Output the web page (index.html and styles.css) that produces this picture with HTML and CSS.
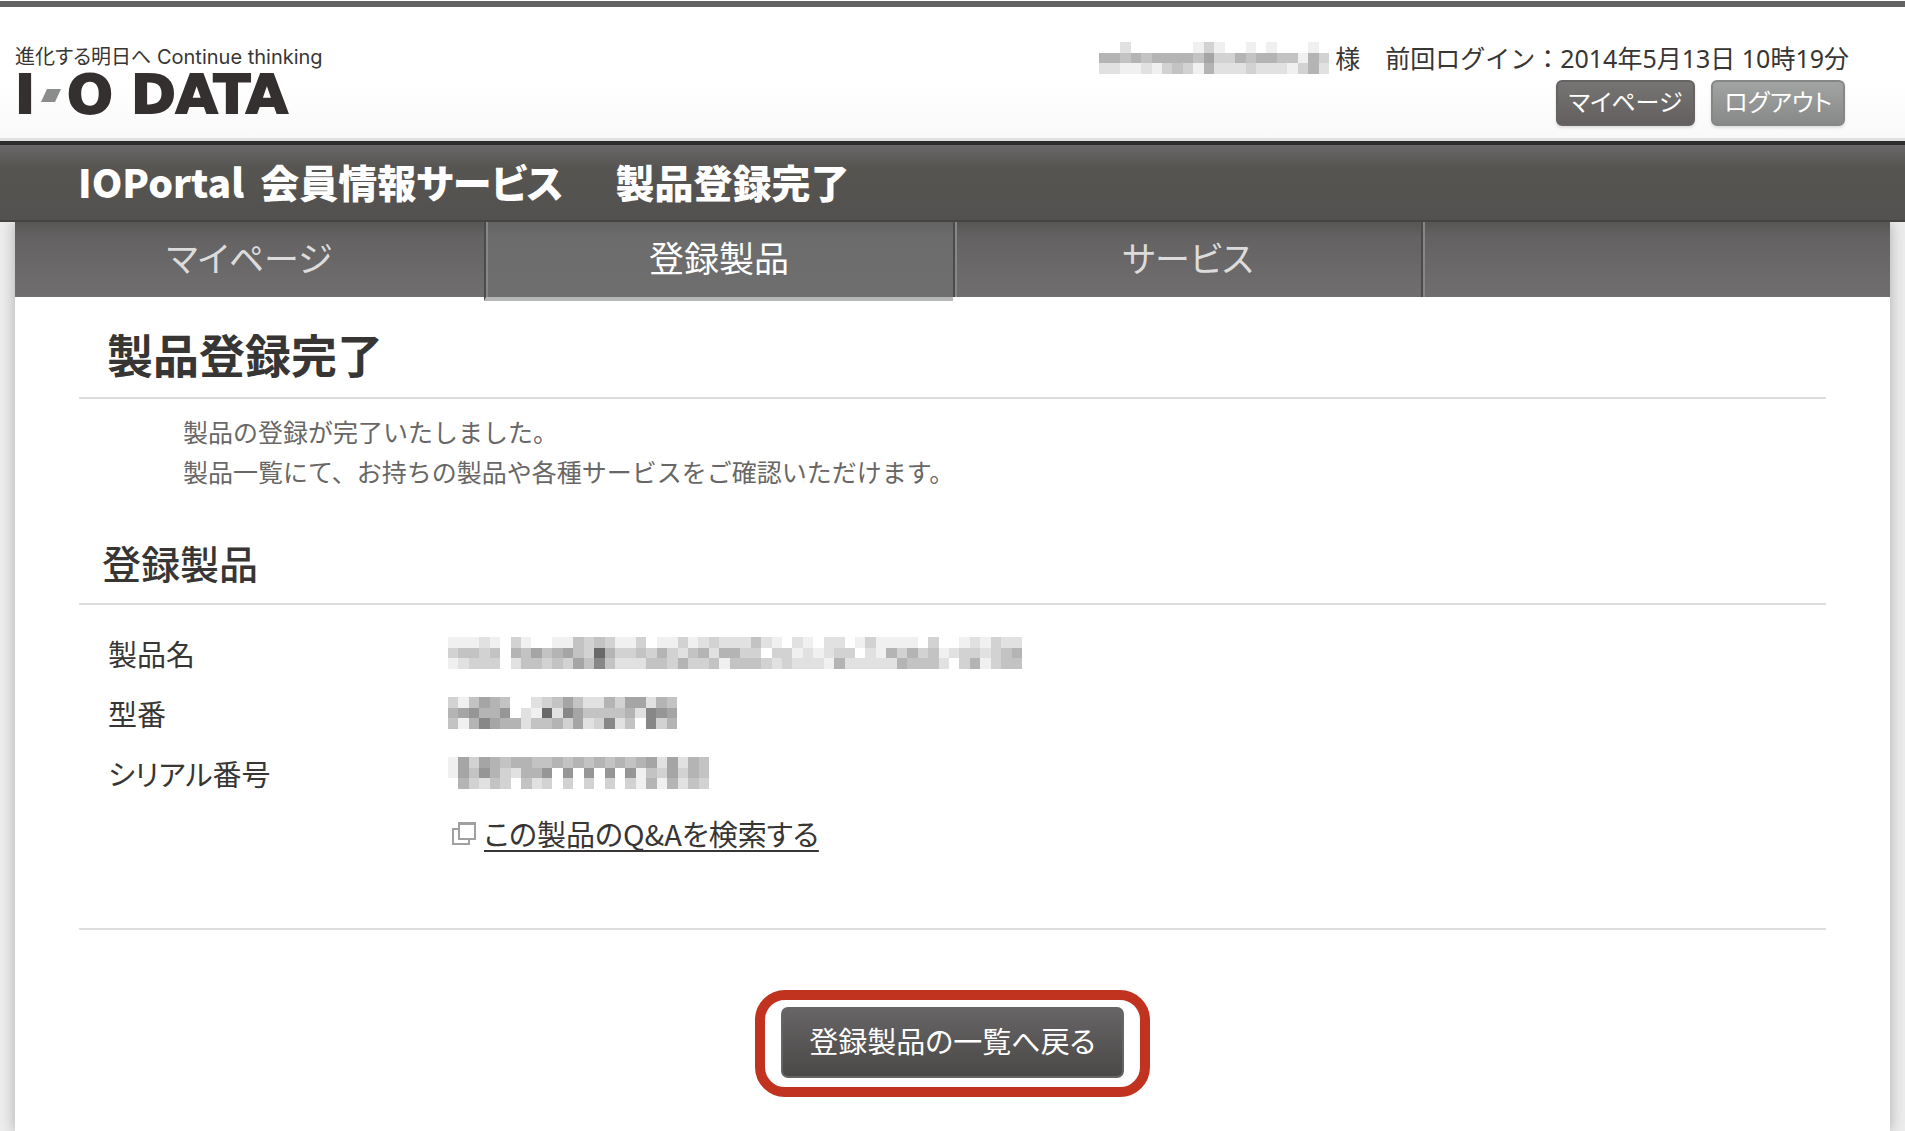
FILE: index.html
```
<!DOCTYPE html>
<html lang="ja">
<head>
    <meta charset="UTF-8">
    <meta name="viewport" content="width=device-width, initial-scale=1.0">
    <title>製品登録完了 | IOPortal 会員情報サービス</title>
    <link rel="stylesheet" href="styles.css">
</head>
<body>
    <header class="header">
        <div class="brand">
            <p class="tagline">進化する明日へ Continue thinking</p>
            <div class="logo">
                <span>I</span>
                <svg class="logo-dash" viewBox="0 0 20 13" aria-hidden="true"><path d="M6 0H20L14 13H0Z" fill="#8b8c8c"/></svg>
                <span>O</span>
                <span class="logo-data">DATA</span>
            </div>
        </div>
        <div class="user">
            <p class="login">
                <svg class="mosaic" data-rows="00020000001310010100010,05545455554633545544153,02211213431522232221352"></svg>
                <span>様　前回ログイン：2014年5月13日 10時19分</span>
            </p>
            <div class="user-buttons">
                <button type="button" class="btn-small">マイページ</button>
                <button type="button" class="btn-small btn-light">ログアウト</button>
            </div>
        </div>
    </header>

    <div class="title-bar"><span class="site">IOPortal</span>会員情報サービス<span class="page">製品登録完了</span></div>

    <div class="container">
        <nav class="nav">
            <a href="#">マイページ</a>
            <a href="#" class="active">登録製品</a>
            <a href="#">サービス</a>
            <span></span>
        </nav>

        <main class="content">
            <h1>製品登録完了</h1>
            <p class="message">製品の登録が完了いたしました。<br>製品一覧にて、お持ちの製品や各種サービスをご確認いただけます。</p>

            <h2>登録製品</h2>
            <dl class="product">
                <dt>製品名</dt>
                <dd><svg class="mosaic" data-rows="1112103100114343113011312322242102102201311110300121322,34434054645643a5334353245255330331212330215353412332345,1233302443436484222443533414443232221522222544420351344"></svg></dd>
                <dt>型番</dt>
                <dd><svg class="mosaic" data-rows="3146540023464225366254,567557021a286444452876,4158655244536238240835"></svg></dd>
                <dt>シリアル番号</dt>
                <dd><svg class="mosaic" data-rows="1636545544545454545626254,1647532557070707071436354,0532430423030303031515243"></svg></dd>
                <dd class="qa">
                    <svg class="window-icon" viewBox="0 0 24 24" aria-hidden="true"><path d="M7 2H23V18H7ZM7 8H1V23H17V18M7 3H23" fill="none" stroke="#9fa0a0" stroke-width="2"/></svg>
                    <a href="#">この製品のQ&amp;Aを検索する</a>
                </dd>
            </dl>

            <div class="actions">
                <div class="highlight"><button type="button" class="btn-back">登録製品の一覧へ戻る</button></div>
            </div>
        </main>
    </div>

    <script src="mosaic.js"></script>
</body>
</html>
```
FILE: styles.css
```
* {
    box-sizing: border-box;
}
body {
    margin: 0;
    padding-top: 1px;
    min-height: 100vh;
    display: flex;
    flex-direction: column;
    font-family: "Noto Sans CJK JP", sans-serif;
    font-feature-settings: "palt";
    color: #383634;
    background-color: #ecedec;
}
h1, h2, p, dl, dd {
    margin: 0;
}
button {
    font-family: inherit;
    font-feature-settings: inherit;
    color: #fff;
    cursor: pointer;
}
.mosaic {
    display: block;
    height: 32px;
}
.header {
    display: flex;
    justify-content: space-between;
    height: 140px;
    padding: 0 56px 0 15px;
    border-top: 6px solid #636363;
    border-bottom: 3px solid #dfe0e0;
    background: linear-gradient(#fff 60%, #f9f9f9);
    box-shadow: 0 -1px #fff;
}
.tagline {
    margin-top: 36px;
    font-family: Inter, "Noto Sans CJK JP", sans-serif;
    font-size: 20px;
    line-height: 28px;
}
.logo {
    display: flex;
    align-items: center;
    gap: 6px;
    height: 48px;
    font-family: "DejaVu Sans", sans-serif;
    font-size: 54px;
    font-weight: bold;
    line-height: 48px;
    color: #33302f;
    -webkit-text-stroke: 2px #33302f;
}
.logo-dash {
    width: 20px;
    height: 13px;
}
.logo-data {
    margin-left: 12px;
}
.user {
    display: flex;
    flex-direction: column;
    align-items: flex-end;
}
.login {
    display: flex;
    align-items: center;
    gap: 6px;
    margin-top: 33px;
    font-family: "Noto Sans", "Noto Sans CJK JP", sans-serif;
    font-size: 25px;
    line-height: 36px;
    font-feature-settings: normal;
}
.user-buttons {
    display: flex;
    gap: 16px;
    margin: 4px 4px 0 0;
}
.btn-small {
    height: 46px;
    padding: 0 11px 4px;
    border: 2px solid #656363;
    border-radius: 6px;
    font-size: 24px;
    line-height: 36px;
    background: linear-gradient(#767574, #635e5f);
    box-shadow: 0 2px 3px #ddd;
}
.btn-light {
    border-color: #858786;
    background: linear-gradient(#a1a4a2, #868988);
}
.title-bar {
    height: 81px;
    padding-left: 78px;
    border-top: 4px solid #2b2c2b;
    border-bottom: 2px solid #454442;
    font-size: 39px;
    font-weight: 900;
    line-height: 73px;
    color: #fff;
    background: linear-gradient(#696768, #565552 30%, #53514f);
}
.site {
    margin-right: 16px;
}
.page {
    margin-left: 52px;
}
.container {
    flex: 1;
    margin: 0 15px;
    background-color: #fff;
    box-shadow: 0 0 14px #aaa;
    clip-path: inset(0 -15px);
}
.nav {
    display: grid;
    grid-template-columns: repeat(4, 1fr);
    height: 75px;
    background: linear-gradient(#575654, #646263 20%, #706e6f);
}
.nav > * {
    height: 75px;
    border-left: 2px solid #4c4b4b;
    box-shadow: inset 2px 0 #878787;
    font-size: 35px;
    line-height: 70px;
    text-align: center;
    text-decoration: none;
    color: #dcdcdc;
}
.nav > :first-child {
    border-left: 0;
    box-shadow: none;
}
.nav .active {
    height: 79px;
    border-bottom: 4px solid #b5b6b6;
    color: #fff;
    background: linear-gradient(#646363, #6c6c6c 20%, #6e6e6e);
}
.content {
    padding: 20px 64px 0;
}
h1 {
    padding: 0 28px 8px;
    border-bottom: 2px solid #dcdcdc;
    font-size: 46px;
    line-height: 72px;
}
.message {
    padding: 12px 104px 0;
    font-size: 25px;
    line-height: 40px;
    font-feature-settings: normal;
    color: #686766;
}
h2 {
    margin-top: 38px;
    padding: 0 23px 8px;
    border-bottom: 2px solid #dcdcdc;
    font-size: 39px;
    font-weight: 500;
    line-height: 66px;
}
.product {
    display: grid;
    grid-template-columns: 340px 1fr;
    grid-auto-rows: 60px;
    padding: 18px 29px 65px;
    border-bottom: 2px solid #dcdcdc;
    font-size: 29px;
    line-height: 60px;
}
.product dd {
    display: flex;
    align-items: center;
}
.product .qa {
    grid-column: 2;
    gap: 8px;
    padding-left: 4px;
}
.qa a {
    color: inherit;
    text-decoration-thickness: 2px;
    text-underline-offset: 4px;
    text-decoration-skip-ink: none;
}
.window-icon {
    width: 24px;
    height: 24px;
}
.actions {
    display: flex;
    justify-content: center;
    padding: 60px 0 32px;
}
.highlight {
    padding: 7px 16px 9px;
    border: 10px solid #c1331f;
    border-radius: 30px;
}
.btn-back {
    display: block;
    height: 71px;
    padding: 0 26px 6px;
    border: 2px solid #666465;
    border-radius: 7px;
    font-size: 29px;
    background: linear-gradient(#666465, #4b4947);
}
```
FILE: mosaic.js
```
// Masks the private values: each hex digit is the darkness of one cell, 3 rows per mosaic
const CELL = 10.43;

document.querySelectorAll('.mosaic').forEach(svg => {
    const rows = svg.dataset.rows.split(',');
    const cols = rows[0].length;
    svg.setAttribute('viewBox', `0 0 ${cols} ${rows.length}`);
    svg.setAttribute('width', Math.round(cols * CELL));
    svg.setAttribute('preserveAspectRatio', 'none');
    svg.setAttribute('shape-rendering', 'crispEdges');

    let rects = '';
    rows.forEach((row, y) => {
        [...row].forEach((digit, x) => {
            const grey = 255 - parseInt(digit, 16) * 15;
            rects += `<rect x="${x}" y="${y}" width="1" height="1" fill="rgb(${grey},${grey},${grey})"/>`;
        });
    });
    svg.innerHTML = rects;
});
```
